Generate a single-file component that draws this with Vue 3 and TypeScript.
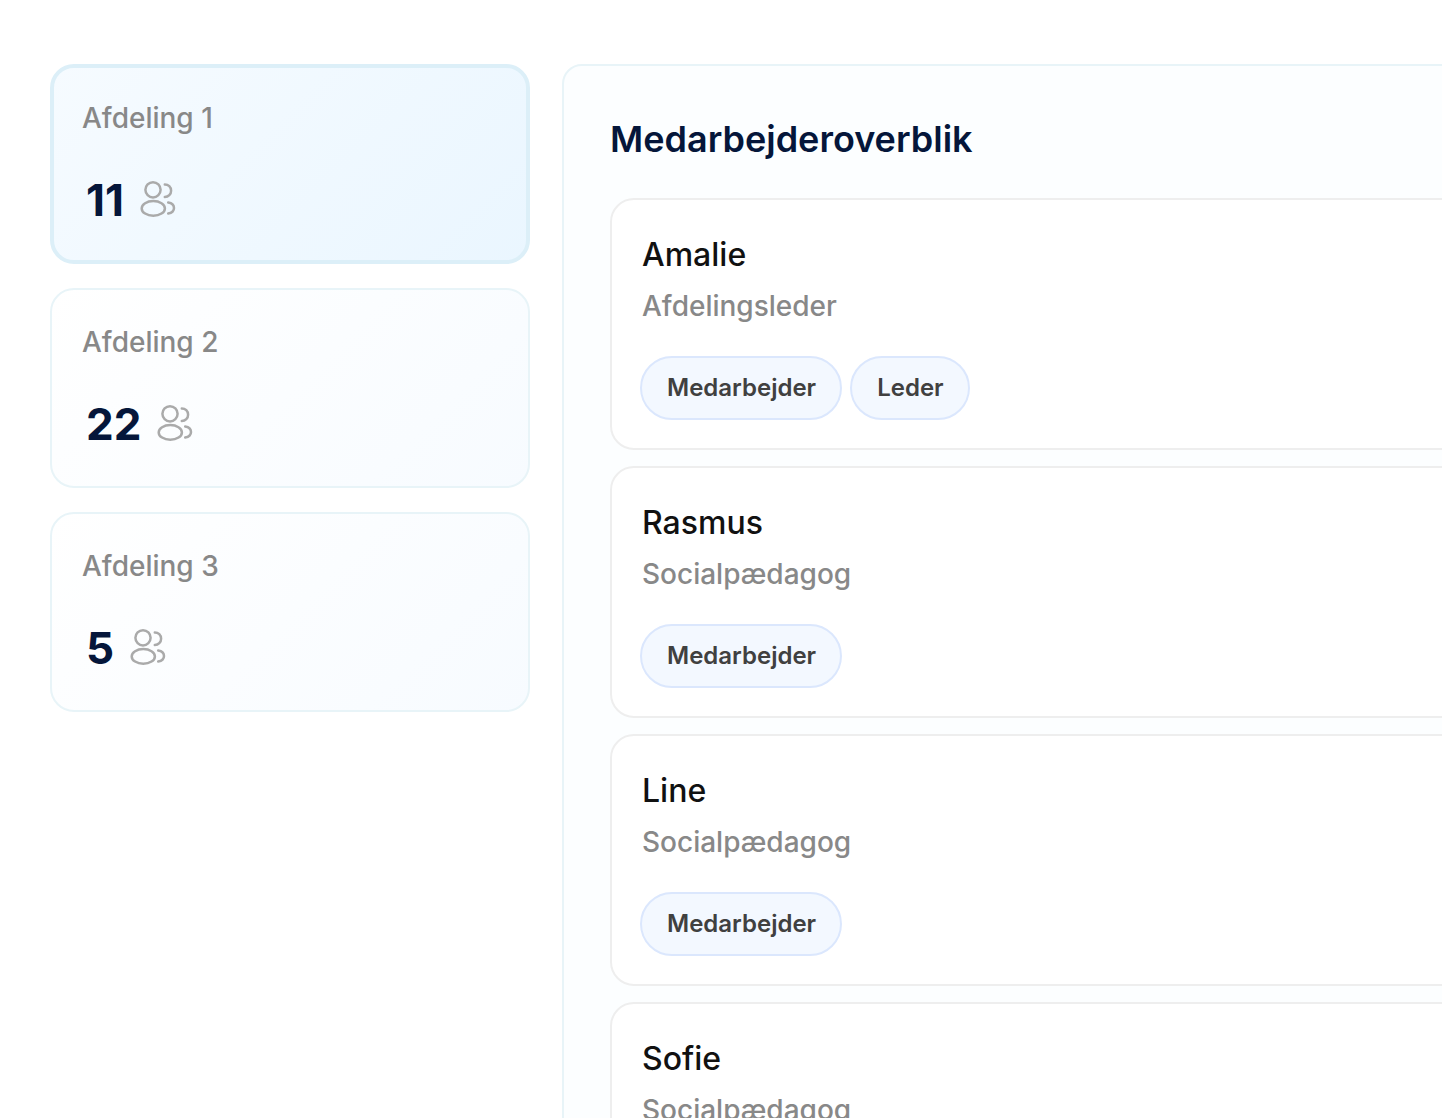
<script setup lang="ts">
import { ref } from 'vue'

interface Department {
  name: string
  count: number
}

interface Employee {
  name: string
  role: string
  tags: string[]
}

const departments: Department[] = [
  { name: 'Afdeling 1', count: 11 },
  { name: 'Afdeling 2', count: 22 },
  { name: 'Afdeling 3', count: 5 },
]

const employees: Employee[] = [
  { name: 'Amalie', role: 'Afdelingsleder', tags: ['Medarbejder', 'Leder'] },
  { name: 'Rasmus', role: 'Socialpædagog', tags: ['Medarbejder'] },
  { name: 'Line', role: 'Socialpædagog', tags: ['Medarbejder'] },
  { name: 'Sofie', role: 'Socialpædagog', tags: ['Medarbejder'] },
]

const selected = ref('Afdeling 1')
</script>

<template>
  <main class="page">
    <nav class="departments">
      <button
        v-for="department in departments"
        :key="department.name"
        type="button"
        class="department"
        :class="{ active: department.name === selected }"
        :aria-pressed="department.name === selected"
        @click="selected = department.name"
      >
        <span class="department-name">{{ department.name }}</span>
        <span class="department-stat">
          <span class="department-count">{{ department.count }}</span>
          <svg class="people" viewBox="0 0 40 40" fill="none" aria-hidden="true">
            <circle cx="15" cy="9.8" r="7.6" />
            <ellipse cx="15.3" cy="28.4" rx="11.6" ry="7.3" />
            <path d="M26.8 4.4c3.6 0 6.3 2.8 6.3 6.3s-2.7 6.3-6.3 6.3" />
            <path d="M30.2 22.4c3.5.6 5.8 2.8 5.8 5.5s-2.3 4.9-5.8 5.6" />
          </svg>
        </span>
      </button>
    </nav>

    <section class="panel">
      <h1 class="panel-title">Medarbejderoverblik</h1>
      <ul class="employees">
        <li v-for="employee in employees" :key="employee.name" class="employee">
          <h2 class="employee-name">{{ employee.name }}</h2>
          <p class="employee-role">{{ employee.role }}</p>
          <div class="tags">
            <span v-for="tag in employee.tags" :key="tag" class="tag">{{ tag }}</span>
          </div>
        </li>
      </ul>
    </section>
  </main>
</template>

<style>
body {
  background: #ffffff;
}
</style>

<style scoped>
.page {
  display: flex;
  align-items: flex-start;
  gap: 32px;
  box-sizing: border-box;
  height: 100vh;
  padding: 64px 0 0 50px;
  overflow: hidden;
  font-family: Inter, sans-serif;
}

.departments {
  display: flex;
  flex: none;
  flex-direction: column;
  gap: 24px;
  width: 480px;
}

.department {
  display: flex;
  flex-direction: column;
  gap: 36px;
  box-sizing: border-box;
  width: 100%;
  padding: 34px 30px;
  border: 2px solid #e8f4f8;
  border-radius: 24px;
  background: linear-gradient(135deg, #ffffff 0%, #f7fbff 100%);
  background-origin: border-box;
  font-family: inherit;
  text-align: left;
  cursor: pointer;
}

.department.active {
  padding: 32px 28px;
  border: 4px solid #dceff8;
  background: linear-gradient(135deg, #f6fbff 0%, #eaf6ff 100%);
  background-origin: border-box;
}

.department-name {
  color: #888888;
  font-size: 28px;
  font-weight: 500;
  line-height: 36px;
}

.department-stat {
  display: flex;
  align-items: center;
  gap: 14px;
  padding-left: 4px;
}

.department-count {
  color: #05163a;
  font-size: 44px;
  font-weight: 700;
  font-kerning: none;
  line-height: 56px;
}

.people {
  width: 40px;
  height: 40px;
  stroke: #aaaaaa;
  stroke-width: 2.5;
  stroke-linecap: round;
}

.panel {
  flex: 1 0 auto;
  margin-right: -96px;
  padding: 48px 46px;
  border: 2px solid #e8f4f8;
  border-radius: 20px;
  background: #fcfeff;
}

.panel-title {
  margin: 0 0 34px;
  color: #05163a;
  font-size: 36px;
  font-weight: 600;
  line-height: 50px;
}

.employees {
  display: flex;
  flex-direction: column;
  gap: 16px;
  margin: 0;
  padding: 0;
  list-style: none;
}

.employee {
  padding: 34px 30px 28px;
  border: 2px solid #eeeeee;
  border-radius: 24px;
  background: #ffffff;
}

.employee-name {
  margin: 0 0 12px;
  color: #111111;
  font-size: 32px;
  font-weight: 500;
  line-height: 42px;
}

.employee-role {
  margin: 0 0 32px;
  color: #888888;
  font-size: 28px;
  font-weight: 500;
  line-height: 36px;
}

.tags {
  display: flex;
  gap: 8px;
  margin-left: -2px;
}

.tag {
  padding: 14px 24px 14px 25px;
  border: 2px solid #dbe7fd;
  border-radius: 32px;
  background: #f3f8ff;
  color: #404040;
  font-size: 24px;
  font-weight: 600;
  line-height: 32px;
}
</style>
